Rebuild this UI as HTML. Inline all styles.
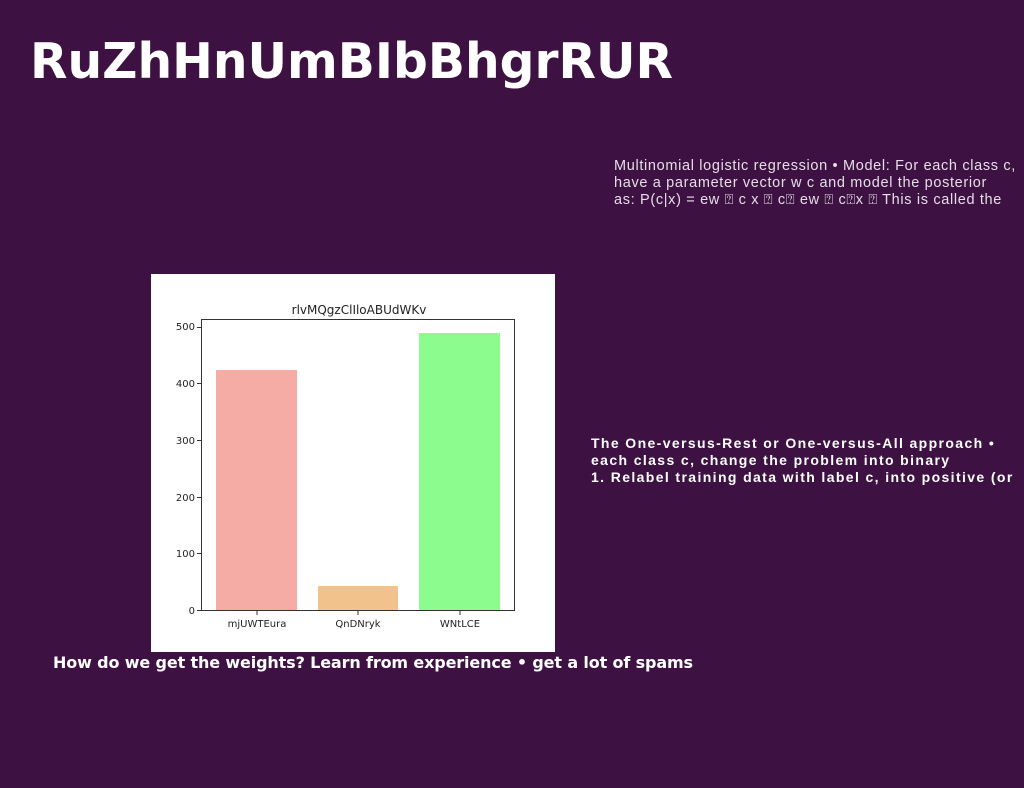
<!DOCTYPE html>
<html><head><meta charset="utf-8"><style>
body{margin:0;width:1024px;height:788px;background:#3d1242;position:relative;overflow:hidden;font-family:"Liberation Sans",sans-serif;color:#fff}
.a{position:absolute;white-space:nowrap}
</style></head><body>
<div class="a" style="left:30px;top:34px;font-size:48.7px;font-weight:bold;line-height:56px;font-family:'DejaVu Sans',sans-serif">RuZhHnUmBIbBhgrRUR</div>
<div class="a" style="left:614px;top:158px;font-size:14.5px;line-height:17px;color:#e6dde8;letter-spacing:0.66px">Multinomial logistic regression • Model: For each class c,<br>have a parameter vector w c and model the posterior<br>as: P(c|x) = ew ⍰ c x ⍰ c⍰ ew ⍰ c⍰x ⍰ This is called the</div>
<div class="a" style="left:591px;top:435px;font-size:14px;font-weight:bold;line-height:17px;letter-spacing:1.38px">The One-versus-Rest or One-versus-All approach •<br>each class c, change the problem into binary<br>1. Relabel training data with label c, into positive (or</div>
<div class="a" style="left:53px;top:653px;font-size:16px;font-weight:bold;line-height:20px;font-family:'DejaVu Sans',sans-serif;letter-spacing:-0.14px">How do we get the weights? Learn from experience • get a lot of spams</div>
<svg class="a" style="left:151px;top:274px" width="404" height="378" viewBox="0 0 404 378">
<rect width="404" height="378" fill="#fff"/>
<text x="208" y="40" font-size="12" text-anchor="middle" fill="#222" font-family="DejaVu Sans">rlvMQgzClIloABUdWKv</text>
<rect x="65" y="96" width="81" height="240" fill="#f4aca4"/>
<rect x="167" y="312" width="80" height="24" fill="#f2c28c"/>
<rect x="268" y="59" width="81" height="277" fill="#8cfc8f"/>
<rect x="50.5" y="45.5" width="313" height="291" fill="none" stroke="#333" stroke-width="1"/>
<g font-size="10" fill="#222" text-anchor="end" font-family="DejaVu Sans">
<text x="44" y="340">0</text><text x="44" y="283">100</text><text x="44" y="227">200</text><text x="44" y="170">300</text><text x="44" y="113">400</text><text x="44" y="56">500</text>
</g>
<g stroke="#333"><line x1="46" y1="336.5" x2="50" y2="336.5"/><line x1="46" y1="279.5" x2="50" y2="279.5"/><line x1="46" y1="223.5" x2="50" y2="223.5"/><line x1="46" y1="166.5" x2="50" y2="166.5"/><line x1="46" y1="109.5" x2="50" y2="109.5"/><line x1="46" y1="53.5" x2="50" y2="53.5"/>
<line x1="106" y1="337" x2="106" y2="341"/><line x1="207" y1="337" x2="207" y2="341"/><line x1="309" y1="337" x2="309" y2="341"/></g>
<g font-size="10" fill="#222" text-anchor="middle" font-family="DejaVu Sans">
<text x="106" y="353">mjUWTEura</text><text x="207" y="353">QnDNryk</text><text x="309" y="353">WNtLCE</text></g>
</svg>
</body></html>
